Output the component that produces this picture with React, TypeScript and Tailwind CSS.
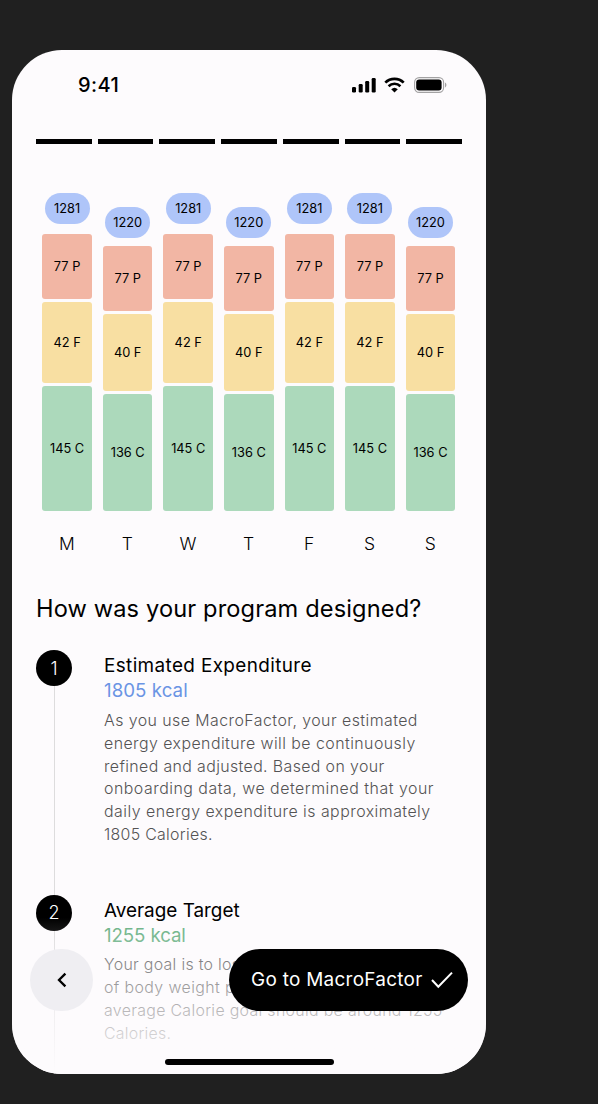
type Line = { text: string; tracking: string };

type Step = {
  number: number;
  title: string;
  titleClass: string;
  value: string;
  valueClass: string;
  lines: Line[];
};

const high = {
  kcal: "1281", protein: "77 P", fat: "42 F", carbs: "145 C",
  gap: "mb-[6.5px]", proteinH: "h-[65px]", fatH: "h-[80.5px]", carbsH: "h-[125px]",
};
const low = {
  kcal: "1220", protein: "77 P", fat: "40 F", carbs: "136 C",
  gap: "mb-[4.8px]", proteinH: "h-[64.7px]", fatH: "h-[76.3px]", carbsH: "h-[117px]",
};

const days = [
  { label: "M", plan: high },
  { label: "T", plan: low },
  { label: "W", plan: high },
  { label: "T", plan: low },
  { label: "F", plan: high },
  { label: "S", plan: high },
  { label: "S", plan: low },
];

const steps: Step[] = [
  {
    number: 1,
    title: "Estimated Expenditure",
    titleClass: "tracking-[0.38px]",
    value: "1805 kcal",
    valueClass: "tracking-[0.05px] text-[#6a94e4]",
    lines: [
      { text: "As you use MacroFactor, your estimated", tracking: "tracking-[0.45px]" },
      { text: "energy expenditure will be continuously", tracking: "tracking-[0.45px]" },
      { text: "refined and adjusted. Based on your", tracking: "tracking-[0.38px]" },
      { text: "onboarding data, we determined that your", tracking: "tracking-[0.51px]" },
      { text: "daily energy expenditure is approximately", tracking: "tracking-[0.48px]" },
      { text: "1805 Calories.", tracking: "tracking-[0.3px]" },
    ],
  },
  {
    number: 2,
    title: "Average Target",
    titleClass: "tracking-[0px]",
    value: "1255 kcal",
    valueClass: "tracking-[-0.1px] text-[#69b184]",
    lines: [
      { text: "Your goal is to lose 0.5%", tracking: "tracking-[0.3px]" },
      { text: "of body weight per week, so your", tracking: "tracking-[0.4px]" },
      { text: "average Calorie goal should be around 1255", tracking: "tracking-[0.32px]" },
      { text: "Calories.", tracking: "tracking-[0.25px]" },
    ],
  },
];

function StatusBar() {
  return (
    <div className="flex h-[70px] shrink-0 items-center justify-between pl-[66px] pr-[39px]">
      <span className="text-[20px] font-medium leading-none tracking-[0.4px]">9:41</span>
      <div className="flex items-center">
        <svg width="25" height="16" viewBox="0 0 25 16">
          <rect x="0" y="10" width="4" height="5.5" rx="1.2" />
          <rect x="6.7" y="7" width="4" height="8.5" rx="1.2" />
          <rect x="13.2" y="4" width="4" height="11.5" rx="1.2" />
          <rect x="19.7" y="1" width="4" height="14.5" rx="1.2" />
        </svg>
        <svg className="ml-[7px]" width="21" height="16" viewBox="0 0 21 16" fill="none" stroke="#000">
          <path d="M1.3 5.6a13 13 0 0 1 18.4 0" strokeWidth="2.7" />
          <path d="M4.6 9.2a8.4 8.4 0 0 1 11.8 0" strokeWidth="2.6" />
          <path d="M10.5 15.6 7.2 12.2a4.8 4.8 0 0 1 6.6 0Z" fill="#000" stroke="none" />
        </svg>
        <svg className="ml-[9px]" width="33" height="16" viewBox="0 0 33 16">
          <rect x="0.6" y="0.6" width="29" height="14.8" rx="4.6" fill="none" stroke="#a3a2a3" strokeWidth="1.1" />
          <rect x="2.2" y="2.6" width="25.4" height="10.9" rx="3" />
          <path d="M31 5.6c1.9.7 1.9 4.1 0 4.8Z" fill="#a3a2a3" />
        </svg>
      </div>
    </div>
  );
}

function Chart() {
  return (
    <div className="mt-[49px] flex h-[318px] shrink-0 items-end gap-[10.95px] pl-[30.3px] pr-[30.7px]">
      {days.map(({ plan }, i) => (
        <div key={i} className="flex flex-1 flex-col gap-[3.5px] text-center text-[12.8px]">
          <div className={`flex h-[31px] w-[45px] items-center justify-center self-center rounded-full bg-[#afc5f9] pt-px ${plan.gap}`}>
            {plan.kcal}
          </div>
          <div className={`flex items-center justify-center rounded-[3px] bg-[#f2b6a4] pt-px ${plan.proteinH}`}>{plan.protein}</div>
          <div className={`flex items-center justify-center rounded-[3px] bg-[#f8dfa2] ${plan.fatH}`}>{plan.fat}</div>
          <div className={`flex items-center justify-center rounded-[3px] bg-[#acd9bb] ${plan.carbsH}`}>{plan.carbs}</div>
        </div>
      ))}
    </div>
  );
}

function StepItem({ step }: { step: Step }) {
  return (
    <li className="flex h-[244.5px] shrink-0">
      <div className="flex w-[68px] flex-col">
        <div className="flex h-9 w-9 shrink-0 items-center justify-center rounded-full bg-black text-[18px] font-light text-white">
          {step.number}
        </div>
        <div className="ml-[18px] w-px flex-1 bg-[#dddcdd]" />
      </div>
      <div className="whitespace-nowrap pt-[3px]">
        <h2 className={`text-[18.9px] leading-[25px] ${step.titleClass}`}>{step.title}</h2>
        <p className={`text-[18.7px] leading-[25px] ${step.valueClass}`}>{step.value}</p>
        <p className="mt-[6.7px] text-[15.9px] font-light leading-[22.9px] text-[#545354]">
          {step.lines.map((line) => (
            <span key={line.text} className={`block ${line.tracking}`}>{line.text}</span>
          ))}
        </p>
      </div>
    </li>
  );
}

export default function App() {
  return (
    <div className="h-[1104px] w-[598px] overflow-hidden bg-[#202020] pl-3 pt-[50px] font-['Inter',sans-serif] text-black">
      <main className="relative flex h-[1024px] w-[474px] flex-col overflow-hidden rounded-[50px] bg-[#fdfbfd]">
        <StatusBar />
        <div className="mt-[19px] flex shrink-0 gap-[6px] px-6">
          {days.map((_, i) => (
            <div key={i} className="h-[5px] flex-1 bg-black" />
          ))}
        </div>
        <Chart />
        <div className="mt-[19px] flex h-7 shrink-0 items-center gap-[10.95px] pl-[30px] pr-[31px] text-[17.5px] font-light">
          {days.map((day, i) => (
            <span key={i} className="flex-1 text-center">{day.label}</span>
          ))}
        </div>
        <h1 className="mt-[35px] shrink-0 whitespace-nowrap px-6 text-[23.6px] leading-[32px] tracking-[0.14px]">
          How was your program designed?
        </h1>
        <ol className="mt-[25px] flex flex-col px-6">
          {steps.map((step) => (
            <StepItem key={step.number} step={step} />
          ))}
        </ol>

        <div className="absolute inset-x-0 bottom-0 flex h-[174px] flex-col justify-end bg-linear-to-b from-[#fdfbfd]/0 from-10% to-[#fdfbfd]">
          <div className="flex items-center justify-between px-[18px]">
            <button className="flex h-[62.5px] w-[63px] items-center justify-center rounded-full bg-[#efeef2]">
              <svg width="10" height="16" viewBox="0 0 10 16" fill="none" stroke="#000" strokeWidth="2.3">
                <path d="M8.4 1.6 2 8l6.4 6.4" />
              </svg>
            </button>
            <button className="flex h-[62.5px] w-[239px] items-center justify-between whitespace-nowrap rounded-full bg-black pl-[22px] pr-[15px] text-[18.9px] tracking-[0.3px] text-white">
              Go to MacroFactor
              <svg width="22" height="18" viewBox="0 0 22 18" fill="none" stroke="#fff" strokeWidth="2">
                <path d="m1 9 6.3 6.8L21 1.6" />
              </svg>
            </button>
          </div>
          <div className="mb-[9px] ml-[153px] mt-[48px] h-[6px] w-[169px] rounded-full bg-black" />
        </div>
      </main>
    </div>
  );
}
